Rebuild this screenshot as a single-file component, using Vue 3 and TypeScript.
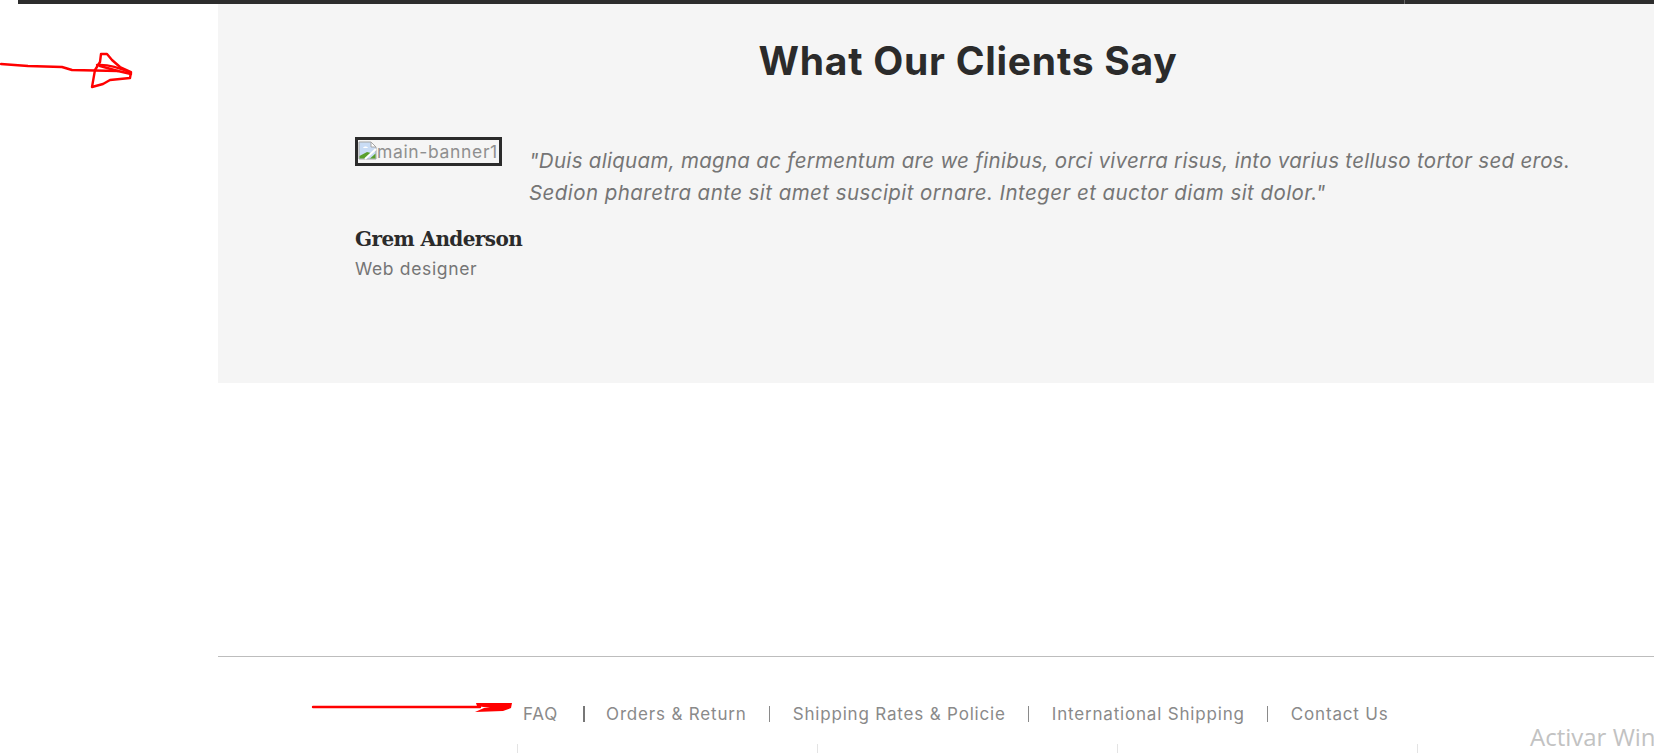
<script setup lang="ts">
const footerLinks = ['Orders & Return', 'Shipping Rates & Policie', 'International Shipping', 'Contact Us']
const ticks = [0, 1, 2, 3]
</script>

<template>
  <div class="page">
    <div class="top-bar"><span class="top-bar-tick"></span></div>

    <section class="testimonials">
      <h2 class="title">What Our Clients Say</h2>
      <div class="quote-row">
        <div class="broken-img">
          <svg class="broken-icon" width="19" height="19" viewBox="0 0 19 19">
            <path d="M1 1H13L18 6V18H1Z" fill="#c9dcf5" stroke="#a6a6a6" />
            <path d="M13 1V6H18Z" fill="#fff" stroke="#a6a6a6" />
            <path d="M5 7c1-2 4-2 5 0Z" fill="#fff" />
            <path d="M1.5 17.5V15L9 11l4 1-6 5.5Z" fill="#5aa02c" />
            <path d="M12 17.5l5.5-5v5Z" fill="#5aa02c" />
            <path d="M7 18l11-10" stroke="#fff" stroke-width="2" />
          </svg>
          <span>main-banner1</span>
        </div>
        <p class="quote">
          "Duis aliquam, magna ac fermentum are we finibus, orci viverra risus, into varius telluso tortor sed eros.<br />
          <span class="quote-end">Sedion pharetra ante sit amet suscipit ornare. Integer et auctor diam sit dolor."</span>
        </p>
      </div>
      <h4 class="name">Grem Anderson</h4>
      <div class="role">Web designer</div>
    </section>

    <footer class="footer">
      <nav class="links">
        <a class="link">FAQ</a>
        <span class="sep sep-first"></span>
        <template v-for="(label, i) in footerLinks" :key="label">
          <a class="link">{{ label }}</a>
          <span v-if="i < footerLinks.length - 1" class="sep"></span>
        </template>
      </nav>
      <div class="ticks">
        <span v-for="t in ticks" :key="t" class="tick"></span>
      </div>
    </footer>

    <!-- hand drawn arrows on top of the screenshot -->
    <svg class="scribble" width="1654" height="753" viewBox="0 0 1654 753" fill="none">
      <g stroke="#ff0000" stroke-width="2.4" stroke-linejoin="round" stroke-linecap="round">
        <path d="M1 64L28 66L62 67L72 70L118 71" />
        <path d="M101 54H107L112 60L120 67L131 72L130 78L110 80L103 84L92 87L95 70L100 62Z" />
        <path d="M97 65C108 64 120 68 131 73" />
        <path d="M100 66L118 71L131 74" />
        <path d="M313 707H480" />
      </g>
      <path d="M476 703H512L511 708L503 711L475 712L484 708H490L477 706Z" fill="#ff0000" />
    </svg>

    <div class="watermark">Activar Windows</div>
  </div>
</template>

<style>
html,
body {
  margin: 0;
  background: #fff;
  overflow: hidden;
}
</style>

<style scoped>
.page {
  position: relative;
  width: 1654px;
  height: 753px;
  overflow: hidden;
  background: #fff;
  font-family: Inter, "Open Sans", sans-serif;
}

.top-bar {
  position: relative;
  height: 4px;
  margin-left: 18px;
  background: #2d2d2d;
}

.top-bar-tick {
  position: absolute;
  left: 1386px;
  top: 0;
  width: 1px;
  height: 4px;
  background: #666;
}

.testimonials {
  box-sizing: border-box;
  width: 1500px;
  height: 379px;
  margin-left: 218px;
  padding: 34px 137px 0;
  background: #f5f5f5;
}

.title {
  margin: 0;
  color: #2b2b2b;
  font-size: 39px;
  line-height: 46px;
  font-weight: 700;
  text-align: center;
  letter-spacing: 0.75px;
}

.quote-row {
  display: flex;
  align-items: flex-start;
  gap: 27px;
  margin-top: 53px;
}

.broken-img {
  box-sizing: border-box;
  display: flex;
  flex: none;
  width: 147px;
  height: 29px;
  border: 3px solid #2b2b2b;
  color: #8f8f8f;
  font-size: 17.5px;
  line-height: 23px;
  letter-spacing: 0.65px;
  white-space: nowrap;
  overflow: hidden;
}

.broken-icon {
  flex: none;
  margin-top: 1px;
}

.quote {
  margin: 8px 0 0;
  color: #757575;
  font-size: 20.5px;
  line-height: 32px;
  font-style: italic;
  letter-spacing: 0.3px;
  white-space: nowrap;
}

.quote-end {
  letter-spacing: 0.44px;
}

.name {
  margin: 16px 0 0;
  color: #2b2b2b;
  font-family: "DejaVu Serif", serif;
  font-size: 20px;
  line-height: 28px;
  font-weight: 700;
  letter-spacing: -0.6px;
}

.role {
  margin-top: 4px;
  color: #757575;
  font-size: 17.5px;
  line-height: 24px;
  letter-spacing: 0.65px;
}

.footer {
  width: 1500px;
  height: 96px;
  margin-top: 273px;
  margin-left: 218px;
  border-top: 1px solid #bdbdbd;
}

.links {
  display: flex;
  align-items: center;
  height: 24px;
  margin-top: 45px;
  padding-left: 305px;
  color: #8a8a8a;
  font-size: 17px;
  letter-spacing: 0.82px;
  white-space: nowrap;
}

.sep {
  width: 1px;
  height: 16px;
  margin: 0 22.5px;
  background: #8a8a8a;
}

.sep-first {
  width: 2px;
  margin: 0 21px 0 25px;
  background: #777;
}

.ticks {
  display: flex;
  gap: 299px;
  margin-top: 18px;
  padding-left: 299px;
}

.tick {
  width: 1px;
  height: 12px;
  background: #e4e4e4;
}

.scribble {
  position: absolute;
  left: 0;
  top: 0;
  pointer-events: none;
}

.watermark {
  position: absolute;
  left: 1530px;
  top: 722px;
  color: #c2c2c2;
  font-family: "Open Sans", sans-serif;
  font-size: 24px;
  line-height: 30px;
  white-space: nowrap;
}
</style>
